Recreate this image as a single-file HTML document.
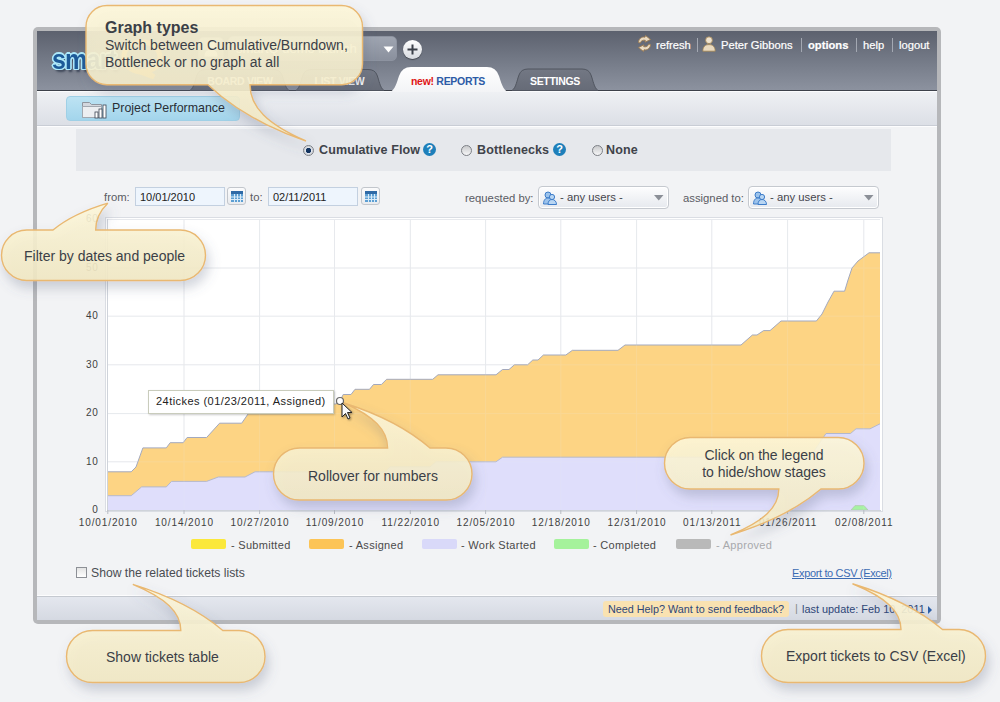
<!DOCTYPE html>
<html><head><meta charset="utf-8"><style>
*{box-sizing:border-box}
html,body{margin:0;padding:0}
body{width:1000px;height:702px;position:relative;overflow:hidden;background:#f2f3f5;font-family:"Liberation Sans",sans-serif;color:#333}
.abs{position:absolute;white-space:nowrap}
#frame{left:33px;top:27px;width:908px;height:597px;background:#b6b7ba;border-radius:5px}
#inner{left:37px;top:31px;width:900px;height:589px;background:#f2f3f5}
#hdr{left:37px;top:31px;width:900px;height:60px;background:linear-gradient(#5c616e,#747a87 50%,#8c929f);border-bottom:1px solid #3d414a}
#sub{left:37px;top:91px;width:900px;height:35px;background:linear-gradient(#eff1f4,#dcdfe6);border-bottom:1px solid #c9cdd5}
.toplinks{top:38.5px;font-size:11.2px;color:#fff;-webkit-text-stroke:0.2px #fff}
.sep{top:38px;width:1px;height:14px;background:#a3a8b2}
.tab{font-size:10.5px;font-weight:bold;color:#fff;text-align:center;letter-spacing:-0.3px}
#radiopanel{left:76px;top:129px;width:815px;height:42px;background:#e6e8ec}
.rlabel{font-size:12.5px;font-weight:bold;color:#40434a;letter-spacing:0.12px}
.radio{width:11px;height:11px;border-radius:50%;border:1px solid #7d8086;background:linear-gradient(#c9cacc,#f6f6f7)}
.q{width:13px;height:13px;border-radius:50%;background:#1e7fba;color:#fff;font-size:11px;font-weight:bold;text-align:center;line-height:13px}
.lbl{font-size:11.3px;color:#5a5b63}
.inp{height:19px;border:1px solid #c3d0e0;background:#eef5fd;font-size:11px;color:#222;padding:3px 0 0 4px}
.cal{width:19px;height:18px;border:1px solid #c2c6cc;border-radius:3px;background:linear-gradient(#fbfbfc,#e9ebee)}
.sel{height:23px;border:1px solid #c5c9cf;border-radius:4px;background:linear-gradient(#fdfdfe,#e6e9ee);box-shadow:inset 0 0 0 1px #fff}
.ylab{font-size:10px;color:#3f3f3f;text-align:right;width:30px;letter-spacing:0.7px}
.xlab{font-size:10px;color:#3f3f3f;letter-spacing:0.9px;width:90px;text-align:center;text-indent:0.9px}
.leg{font-size:11px;color:#4a4a4a;letter-spacing:0.3px}
.sw{width:35px;height:10px;border-radius:2px}
.bubtext{color:#3b3f47;font-size:14px}
</style></head><body>

<div id="frame" class="abs"></div>
<div id="inner" class="abs"></div>
<div id="hdr" class="abs"></div>
<div id="sub" class="abs"></div>
<div class="abs" style="left:37px;top:91px;width:900px;height:1px;background:#fbfcfd"></div><div class="abs" style="left:37px;top:126px;width:900px;height:1px;background:#fdfdfe"></div>
<div class="abs" style="left:52px;top:43px;font-size:25px;font-weight:bold;color:#1d5a98;letter-spacing:-0.8px;transform:scaleY(1.12);transform-origin:0 0;text-shadow:1.5px 0 #aee9fa,-1.5px 0 #aee9fa,0 1.5px #aee9fa,0 -1.5px #aee9fa,1px 1px #aee9fa,-1px -1px #aee9fa,1px -1px #aee9fa,-1px 1px #aee9fa,2px 2.5px 2px rgba(30,40,60,.7)">smart</div>
<svg class="abs" style="left:120px;top:38px" width="48" height="42" viewBox="0 0 48 42"><path d="M22 4c10 0 18 7 18 15s-6 13-14 14l8 6-14-5C10 33 4 26 4 18S12 4 22 4z" fill="none" stroke="#f2a93a" stroke-width="5"/></svg>
<div class="abs" style="left:198px;top:37px;width:26px;height:24px;border-radius:5px;background:linear-gradient(#a9aeb9,#959ba7);border:1px solid #8a909c"></div>
<svg class="abs" style="left:203px;top:40px" width="16" height="17" viewBox="0 0 16 17"><circle cx="8" cy="5" r="3.8" fill="#f6f7f9"/><path d="M1.5 16.5c0-5 2.8-7 6.5-7s6.5 2 6.5 7z" fill="#f0f1f4"/></svg>
<div class="abs" style="left:228px;top:36px;width:169px;height:25px;border:1px solid #8d93a0;border-radius:5px;background:linear-gradient(#9fa5b1,#8a909d)"></div>
<div class="abs" style="left:236px;top:41px;font-size:13px;color:#fff">smartQ demo launch</div>
<svg class="abs" style="left:383px;top:46px" width="11" height="7"><path d="M0.5 0.5h10L5.5 6.5z" fill="#fff"/></svg>
<div class="abs" style="left:403px;top:40px;width:19px;height:19px;border-radius:50%;background:linear-gradient(#ffffff,#d8dbe0);box-shadow:0 1px 1px rgba(0,0,0,.4)"></div>
<svg class="abs" style="left:403px;top:40px" width="19" height="19"><path d="M9.5 4.5v10M4.5 9.5h10" stroke="#3a3f48" stroke-width="2"/></svg>
<svg class="abs" style="left:637px;top:35px" width="15" height="17" viewBox="0 0 15 17"><path d="M1.5 7.5C1.5 4 4.5 1.5 8 2.2L8.5 0.5 13.5 4.5 8 7.2 8.3 5.3C6 4.8 3.8 5.8 3.3 8z" fill="#eadbc3" stroke="#9c7b50" stroke-width="0.9"/><path d="M13.5 9.5C13.5 13 10.5 15.5 7 14.8L6.5 16.5 1.5 12.5 7 9.8 6.7 11.7C9 12.2 11.2 11.2 11.7 9z" fill="#eadbc3" stroke="#9c7b50" stroke-width="0.9"/></svg>
<div class="abs toplinks" style="left:656px">refresh</div>
<div class="abs sep" style="left:697px"></div>
<svg class="abs" style="left:702px;top:36px" width="14" height="16" viewBox="0 0 14 16"><circle cx="7" cy="4.2" r="3.4" fill="#efe3cf" stroke="#a0814f" stroke-width="0.8"/><path d="M0.8 15.2C0.8 10.5 3.5 8.6 7 8.6S13.2 10.5 13.2 15.2z" fill="#e9d9bf" stroke="#a0814f" stroke-width="0.8"/></svg>
<div class="abs toplinks" style="left:721px">Peter Gibbons</div>
<div class="abs sep" style="left:801px"></div>
<div class="abs toplinks" style="left:808px;font-weight:bold">options</div>
<div class="abs sep" style="left:856px"></div>
<div class="abs toplinks" style="left:863px">help</div>
<div class="abs sep" style="left:892px"></div>
<div class="abs toplinks" style="left:899px">logout</div>
<svg class="abs" style="left:180px;top:60px" width="430" height="32" viewBox="180 60 430 32">
 <defs><linearGradient id="tg" x1="0" y1="0" x2="0" y2="1"><stop offset="0" stop-color="#ffffff"/><stop offset="1" stop-color="#f3f4f6"/></linearGradient>
 <linearGradient id="tg2" x1="0" y1="0" x2="0" y2="1"><stop offset="0" stop-color="#737884"/><stop offset="1" stop-color="#666b77"/></linearGradient></defs>
 <path d="M190 90.5 C194 88 195 80 197 75 Q199 69.5 206 69.5 L273 69.5 Q280 69.5 282 75 C284 80 285 88 289 90.5 Z" fill="url(#tg2)" stroke="#50555f" stroke-width="1"/>
 <path d="M296 90.5 C300 88 301 80 303 75 Q305 69.5 312 69.5 L368 69.5 Q375 69.5 377 75 C379 80 380 88 384 90.5 Z" fill="url(#tg2)" stroke="#50555f" stroke-width="1"/>
 <path d="M512 90.5 C516 88 517 80 519 75 Q521 69 528 69 L582 69 Q589 69 591 75 C593 80 594 88 598 90.5 Z" fill="url(#tg2)" stroke="#50555f" stroke-width="1"/>
 <path d="M390 92 C395 90 397 82 399 76 Q402 67 411 67 L487 67 Q496 67 499 76 C501 82 503 90 508 92 Z" fill="url(#tg)"/>
</svg>
<div class="abs tab" style="left:190px;top:75px;width:100px">BOARD VIEW</div>
<div class="abs tab" style="left:295px;top:75px;width:89px">LIST VIEW</div>
<div class="abs tab" style="left:411px;top:75px;text-align:left"><span style="color:#e01515">new!</span> <span style="color:#2c5ba6">REPORTS</span></div>
<div class="abs tab" style="left:510px;top:75px;width:90px">SETTINGS</div>
<div class="abs" style="left:66px;top:96px;width:174px;height:25px;border:1px solid #9fd0e6;border-radius:4px;background:linear-gradient(#bde3f3,#a3d5ec)"></div>
<svg class="abs" style="left:81px;top:100px" width="27" height="19" viewBox="0 0 27 19"><path d="M1.5 2.5h7l2 2h10v13h-19z" fill="#d3d7de" stroke="#8f959e" stroke-width="1"/><path d="M1.5 6.5h19v11h-19z" fill="#eceef1" stroke="#a2a8b0"/><rect x="14" y="12" width="3" height="6" fill="#fff" stroke="#3c4452" stroke-width="0.8"/><rect x="18" y="9" width="3" height="9" fill="#fff" stroke="#3c4452" stroke-width="0.8"/><rect x="22" y="5" width="3" height="13" fill="#fff" stroke="#3c4452" stroke-width="0.8"/></svg>
<div class="abs" style="left:112px;top:101px;font-size:12.4px;color:#2a2e35">Project Performance</div>

<div id="radiopanel" class="abs"></div>
<div class="abs radio" style="left:303px;top:145px;background:radial-gradient(circle,#13345f 0 2.3px,#e6eaf0 3px,#d0d3d8 4px,#f4f4f5 5px)"></div>
<div class="abs rlabel" style="left:319px;top:143px">Cumulative Flow</div>
<div class="abs q" style="left:423px;top:143px">?</div>
<div class="abs radio" style="left:461px;top:145px"></div>
<div class="abs rlabel" style="left:477px;top:143px">Bottlenecks</div>
<div class="abs q" style="left:553px;top:143px">?</div>
<div class="abs radio" style="left:592px;top:145px"></div>
<div class="abs rlabel" style="left:606px;top:143px">None</div>
<div class="abs lbl" style="left:104px;top:191px">from:</div>
<div class="abs inp" style="left:135px;top:187px;width:90px">10/01/2010</div>
<div class="abs cal" style="left:227px;top:187px"></div>
<div class="abs lbl" style="left:250px;top:191px">to:</div>
<div class="abs inp" style="left:268px;top:187px;width:90px">02/11/2011</div>
<div class="abs cal" style="left:361px;top:187px"></div>
<div class="abs lbl" style="left:465px;top:192px">requested by:</div>
<div class="abs sel" style="left:538px;top:186px;width:131px"></div>
<div class="abs lbl" style="left:560px;top:191px;color:#44454d">- any users -</div>
<div class="abs lbl" style="left:683px;top:192px">assigned to:</div>
<div class="abs sel" style="left:748px;top:186px;width:131px"></div>
<div class="abs lbl" style="left:770px;top:191px;color:#44454d">- any users -</div>
<svg class="abs" style="left:654px;top:195px" width="10" height="6"><path d="M0 0h9.5L4.75 5.5z" fill="#8b8f97"/></svg>
<svg class="abs" style="left:864px;top:195px" width="10" height="6"><path d="M0 0h9.5L4.75 5.5z" fill="#8b8f97"/></svg>
<svg class="abs" style="left:231px;top:191px" width="12" height="11" viewBox="0 0 12 11"><rect x="0" y="0" width="12" height="11" fill="#5d9fd3"/><rect x="0" y="0" width="12" height="3" fill="#2f6aa6"/><rect x="3" y="3" width="1" height="8" fill="#d9ebf8"/><rect x="6" y="3" width="1" height="8" fill="#d9ebf8"/><rect x="9" y="3" width="1" height="8" fill="#d9ebf8"/><rect x="0" y="5.5" width="12" height="1" fill="#d9ebf8"/><rect x="0" y="8" width="12" height="1" fill="#d9ebf8"/></svg><svg class="abs" style="left:365px;top:191px" width="12" height="11" viewBox="0 0 12 11"><rect x="0" y="0" width="12" height="11" fill="#5d9fd3"/><rect x="0" y="0" width="12" height="3" fill="#2f6aa6"/><rect x="3" y="3" width="1" height="8" fill="#d9ebf8"/><rect x="6" y="3" width="1" height="8" fill="#d9ebf8"/><rect x="9" y="3" width="1" height="8" fill="#d9ebf8"/><rect x="0" y="5.5" width="12" height="1" fill="#d9ebf8"/><rect x="0" y="8" width="12" height="1" fill="#d9ebf8"/></svg><svg class="abs" style="left:543px;top:191px" width="14" height="14" viewBox="0 0 14 14">
<circle cx="5" cy="4" r="3" fill="#9cc3ec" stroke="#3d7cc9" stroke-width="1"/><path d="M0.5 13c0-4 2-6 4.5-6s4.5 2 4.5 6z" fill="#9cc3ec" stroke="#3d7cc9" stroke-width="1"/>
<circle cx="9" cy="6" r="2.6" fill="#b9d6f3" stroke="#3d7cc9" stroke-width="1"/><path d="M5 13.5c0-3.5 1.8-5 4-5s4.5 1.5 4.5 5z" fill="#b9d6f3" stroke="#3d7cc9" stroke-width="1"/></svg><svg class="abs" style="left:753px;top:191px" width="14" height="14" viewBox="0 0 14 14">
<circle cx="5" cy="4" r="3" fill="#9cc3ec" stroke="#3d7cc9" stroke-width="1"/><path d="M0.5 13c0-4 2-6 4.5-6s4.5 2 4.5 6z" fill="#9cc3ec" stroke="#3d7cc9" stroke-width="1"/>
<circle cx="9" cy="6" r="2.6" fill="#b9d6f3" stroke="#3d7cc9" stroke-width="1"/><path d="M5 13.5c0-3.5 1.8-5 4-5s4.5 1.5 4.5 5z" fill="#b9d6f3" stroke="#3d7cc9" stroke-width="1"/></svg>
<svg class="abs" style="left:0;top:0" width="1000" height="702">
 <rect x="105.5" y="217.5" width="777" height="294" fill="#fff" stroke="#dadde3" stroke-width="1"/>
 <g stroke="#e7e9ed" stroke-width="1"><line x1="184" y1="219" x2="184" y2="510" /><line x1="259.6" y1="219" x2="259.6" y2="510" /><line x1="334.5" y1="219" x2="334.5" y2="510" /><line x1="410.3" y1="219" x2="410.3" y2="510" /><line x1="485.6" y1="219" x2="485.6" y2="510" /><line x1="560.8" y1="219" x2="560.8" y2="510" /><line x1="636.6" y1="219" x2="636.6" y2="510" /><line x1="711.8" y1="219" x2="711.8" y2="510" /><line x1="787.6" y1="219" x2="787.6" y2="510" /><line x1="863.8" y1="219" x2="863.8" y2="510" /><line x1="107" y1="461.8" x2="880" y2="461.8" /><line x1="107" y1="413.6" x2="880" y2="413.6" /><line x1="107" y1="364.8" x2="880" y2="364.8" /><line x1="107" y1="316.2" x2="880" y2="316.2" /><line x1="107" y1="268" x2="880" y2="268" /><line x1="107" y1="219.5" x2="880" y2="219.5" /></g>
 <polygon points="107.8,495.7 131.2,495.7 141.6,486.9 166.3,486.9 171.5,481.4 206.6,481.4 218.3,477.0 245.0,477.0 255.0,471.8 385.0,471.8 390.0,466.9 430.0,466.9 436.0,461.8 496.0,461.8 502.5,457.2 810.0,457.2 826.0,433.5 850.5,433.5 856.0,428.8 870.0,428.8 880.0,423.8 880.0,510.0 107.8,510.0" fill="#dfdefb" />
 <polygon points="107.8,471.8 131.2,471.8 136.0,467.0 142.9,447.9 166.3,447.9 170.2,442.7 183.2,442.7 187.1,437.5 206.6,437.5 219.6,423.2 241.7,423.2 248.2,413.8 290.0,413.8 295.0,409.0 320.0,409.0 326.0,404.0 336.0,404.0 340.0,401.0 343.2,394.5 351.0,394.5 355.0,389.3 369.5,389.3 373.5,384.5 381.4,384.5 386.6,379.3 432.7,379.3 438.0,374.8 496.0,374.8 502.5,369.5 509.0,369.5 514.4,364.8 527.6,364.8 532.8,360.0 538.0,360.0 543.4,355.0 565.8,355.0 572.4,350.3 618.0,350.3 625.0,345.0 741.0,345.0 752.4,335.0 757.0,335.0 763.6,330.6 770.0,330.6 781.0,321.0 816.4,321.0 822.0,314.0 828.0,302.0 834.0,291.2 844.6,291.2 848.0,280.0 852.0,268.0 858.0,261.0 869.0,252.8 880.0,252.8 880.0,423.8 870.0,428.8 856.0,428.8 850.5,433.5 826.0,433.5 810.0,457.2 502.5,457.2 496.0,461.8 436.0,461.8 430.0,466.9 390.0,466.9 385.0,471.8 255.0,471.8 245.0,477.0 218.3,477.0 206.6,481.4 171.5,481.4 166.3,486.9 141.6,486.9 131.2,495.7 107.8,495.7" fill="#fdd484" />
 <polyline points="107.8,495.7 131.2,495.7 141.6,486.9 166.3,486.9 171.5,481.4 206.6,481.4 218.3,477.0 245.0,477.0 255.0,471.8 385.0,471.8 390.0,466.9 430.0,466.9 436.0,461.8 496.0,461.8 502.5,457.2 810.0,457.2 826.0,433.5 850.5,433.5 856.0,428.8 870.0,428.8 880.0,423.8" fill="none" stroke="#b4b8cd" stroke-width="1"/>
 <polyline points="107.8,471.8 131.2,471.8 136.0,467.0 142.9,447.9 166.3,447.9 170.2,442.7 183.2,442.7 187.1,437.5 206.6,437.5 219.6,423.2 241.7,423.2 248.2,413.8 290.0,413.8 295.0,409.0 320.0,409.0 326.0,404.0 336.0,404.0 340.0,401.0 343.2,394.5 351.0,394.5 355.0,389.3 369.5,389.3 373.5,384.5 381.4,384.5 386.6,379.3 432.7,379.3 438.0,374.8 496.0,374.8 502.5,369.5 509.0,369.5 514.4,364.8 527.6,364.8 532.8,360.0 538.0,360.0 543.4,355.0 565.8,355.0 572.4,350.3 618.0,350.3 625.0,345.0 741.0,345.0 752.4,335.0 757.0,335.0 763.6,330.6 770.0,330.6 781.0,321.0 816.4,321.0 822.0,314.0 828.0,302.0 834.0,291.2 844.6,291.2 848.0,280.0 852.0,268.0 858.0,261.0 869.0,252.8 880.0,252.8" fill="none" stroke="#a3a9be" stroke-width="1"/>
 <path d="M851 510 L855 505.6 L864 505.6 L868 510 Z" fill="#a6f3a2" stroke="#b5c8b5" stroke-width="0.8"/>
 <g stroke="#e7e9ed" stroke-width="1" opacity="0.15"><line x1="184" y1="219" x2="184" y2="510" /><line x1="259.6" y1="219" x2="259.6" y2="510" /><line x1="334.5" y1="219" x2="334.5" y2="510" /><line x1="410.3" y1="219" x2="410.3" y2="510" /><line x1="485.6" y1="219" x2="485.6" y2="510" /><line x1="560.8" y1="219" x2="560.8" y2="510" /><line x1="636.6" y1="219" x2="636.6" y2="510" /><line x1="711.8" y1="219" x2="711.8" y2="510" /><line x1="787.6" y1="219" x2="787.6" y2="510" /><line x1="863.8" y1="219" x2="863.8" y2="510" /><line x1="107" y1="461.8" x2="880" y2="461.8" /><line x1="107" y1="413.6" x2="880" y2="413.6" /><line x1="107" y1="364.8" x2="880" y2="364.8" /><line x1="107" y1="316.2" x2="880" y2="316.2" /><line x1="107" y1="268" x2="880" y2="268" /><line x1="107" y1="219.5" x2="880" y2="219.5" /></g>
 <line x1="107" y1="510.5" x2="881" y2="510.5" stroke="#cfd3da"/>
 <line x1="107.5" y1="219" x2="107.5" y2="511" stroke="#cfd3da"/>
 <g stroke="#b8bcc4" stroke-width="1"><line x1="107.8" y1="510" x2="107.8" y2="514" /><line x1="184" y1="510" x2="184" y2="514" /><line x1="259.6" y1="510" x2="259.6" y2="514" /><line x1="334.5" y1="510" x2="334.5" y2="514" /><line x1="410.3" y1="510" x2="410.3" y2="514" /><line x1="485.6" y1="510" x2="485.6" y2="514" /><line x1="560.8" y1="510" x2="560.8" y2="514" /><line x1="636.6" y1="510" x2="636.6" y2="514" /><line x1="711.8" y1="510" x2="711.8" y2="514" /><line x1="787.6" y1="510" x2="787.6" y2="514" /><line x1="863.8" y1="510" x2="863.8" y2="514" /></g>
</svg>
<div class="abs ylab" style="left:68.5px;top:503.8px">0</div><div class="abs ylab" style="left:68.5px;top:455.6px">10</div><div class="abs ylab" style="left:68.5px;top:407.4px">20</div><div class="abs ylab" style="left:68.5px;top:358.6px">30</div><div class="abs ylab" style="left:68.5px;top:310.0px">40</div><div class="abs ylab" style="left:68.5px;top:261.8px">50</div><div class="abs ylab" style="left:68.5px;top:213.3px">60</div><div class="abs xlab" style="left:62.8px;top:517px">10/01/2010</div><div class="abs xlab" style="left:139.0px;top:517px">10/14/2010</div><div class="abs xlab" style="left:214.6px;top:517px">10/27/2010</div><div class="abs xlab" style="left:289.5px;top:517px">11/09/2010</div><div class="abs xlab" style="left:365.3px;top:517px">11/22/2010</div><div class="abs xlab" style="left:440.6px;top:517px">12/05/2010</div><div class="abs xlab" style="left:515.8px;top:517px">12/18/2010</div><div class="abs xlab" style="left:591.6px;top:517px">12/31/2010</div><div class="abs xlab" style="left:666.8px;top:517px">01/13/2011</div><div class="abs xlab" style="left:742.6px;top:517px">01/26/2011</div><div class="abs xlab" style="left:818.8px;top:517px">02/08/2011</div>
<div class="abs sw" style="left:191px;top:539px;background:#fbe83b"></div><div class="abs leg" style="left:231px;top:539px">- Submitted</div>
<div class="abs sw" style="left:309px;top:539px;background:#fcc456"></div><div class="abs leg" style="left:349px;top:539px">- Assigned</div>
<div class="abs sw" style="left:422px;top:539px;background:#d9d9f9"></div><div class="abs leg" style="left:461px;top:539px">- Work Started</div>
<div class="abs sw" style="left:554px;top:539px;background:#a5f29b"></div><div class="abs leg" style="left:593px;top:539px">- Completed</div>
<div class="abs sw" style="left:676px;top:539px;background:#b9b9b9"></div><div class="abs leg" style="left:716px;top:539px;color:#a9aaad">- Approved</div>
<div class="abs" style="left:148px;top:390px;width:186px;height:24px;background:#fff;border:1px solid #c9ccbc;box-shadow:1px 1px 2px rgba(0,0,0,.2)"></div>
<div class="abs" style="left:156px;top:395px;font-size:11px;letter-spacing:0.45px;color:#222">24tickes (01/23/2011, Assigned)</div>
<svg class="abs" style="left:330px;top:394px" width="30" height="30"><circle cx="10" cy="7" r="3.5" fill="#fff" stroke="#666" stroke-width="1.2"/>
<path d="M12 9 L12 23 L15.5 19.5 L18 25 L20 24 L17.5 18.5 L22 18.5 Z" fill="#fff" stroke="#222" stroke-width="1" style="filter:drop-shadow(1px 1px 1px rgba(0,0,0,.4))"/></svg>

<div class="abs" style="left:76px;top:567px;width:11px;height:11px;border:1px solid #8d9096;background:linear-gradient(#e4e4e4,#fff)"></div>
<div class="abs" style="left:91px;top:565.5px;font-size:12.2px;color:#4a4d52">Show the related tickets lists</div>
<div class="abs" style="left:792px;top:567px;font-size:11px;color:#3b6bb3;text-decoration:underline;letter-spacing:-0.35px">Export to CSV (Excel)</div>
<div class="abs" style="left:37px;top:595px;width:900px;height:1px;background:#fdfdfe"></div><div class="abs" style="left:37px;top:596px;width:900px;height:24px;background:linear-gradient(#e4e7ee,#d5d9e2);border-top:1px solid #c5c9d0"></div>
<div class="abs" style="left:603px;top:601px;width:186px;height:16px;background:#f9e2b1;border-radius:3px"></div>
<div class="abs" style="left:608px;top:603px;font-size:10.8px;color:#2e4677">Need Help? Want to send feedback?</div>
<div class="abs" style="left:795px;top:602px;font-size:11px;color:#888">|</div>
<div class="abs" style="left:802px;top:603px;font-size:10.9px;color:#2e4677">last update: Feb 10, 2011</div>
<svg class="abs" style="left:927px;top:605px" width="6" height="10"><path d="M1 1 L5 5 L1 9 Z" fill="#2c5fa8"/></svg>
<svg class="abs" style="left:0;top:0" width="1000" height="702">
<defs>
<linearGradient id="bg" x1="0" y1="0" x2="0" y2="1"><stop offset="0" stop-color="#fdf7d9"/><stop offset="1" stop-color="#f2e9c4"/></linearGradient>
<filter id="sh" x="-20%" y="-30%" width="140%" height="170%"><feGaussianBlur in="SourceAlpha" stdDeviation="6"/><feOffset dx="3" dy="7" result="b"/><feFlood flood-color="#5a6580" flood-opacity="0.3"/><feComposite in2="b" operator="in"/><feMerge><feMergeNode/><feMergeNode in="SourceGraphic"/></feMerge></filter>
</defs>
<path d="M107.00,5.50 L341.50,5.50 A21,21 0 0 1 362.50,26.50 L362.50,63.70 A21,21 0 0 1 341.50,84.70 L250.00,84.70 C250.00,107.22 267.36,124.11 306.00,141.00 C273.66,129.74 237.40,112.85 208.00,84.70 L107.00,84.70 A21,21 0 0 1 86.00,63.70 L86.00,26.50 A21,21 0 0 1 107.00,5.50 Z" fill="url(#bg)" fill-opacity="0.89" stroke="#e9b871" stroke-width="1.4" filter="url(#sh)"/>
<path d="M26.75,230.00 L53.00,230.00 C69.44,216.60 89.72,208.56 107.80,203.20 C99.45,211.24 95.70,219.28 95.70,230.00 L180.25,230.00 A25.25,25.25 0 0 1 205.50,255.25 L205.50,255.25 A25.25,25.25 0 0 1 180.25,280.50 L26.75,280.50 A25.25,25.25 0 0 1 1.50,255.25 L1.50,255.25 A25.25,25.25 0 0 1 26.75,230.00 Z" fill="url(#bg)" fill-opacity="0.89" stroke="#e9b871" stroke-width="1.4" filter="url(#sh)"/>
<path d="M299.50,448.00 L387.60,448.00 C387.60,430.00 374.08,416.50 344.00,403.00 C372.38,412.00 404.20,425.50 430.00,448.00 L446.00,448.00 A26,26 0 0 1 472.00,474.00 L472.00,474.00 A26,26 0 0 1 446.00,500.00 L299.50,500.00 A26,26 0 0 1 273.50,474.00 L273.50,474.00 A26,26 0 0 1 299.50,448.00 Z" fill="url(#bg)" fill-opacity="0.89" stroke="#e9b871" stroke-width="1.4" filter="url(#sh)"/>
<path d="M690.25,437.50 L838.25,437.50 A25.75,25.75 0 0 1 864.00,463.25 L864.00,463.25 A25.75,25.75 0 0 1 838.25,489.00 L821.00,489.00 C793.85,512.00 760.37,525.80 730.50,535.00 C763.83,521.20 778.80,507.40 778.80,489.00 L690.25,489.00 A25.75,25.75 0 0 1 664.50,463.25 L664.50,463.25 A25.75,25.75 0 0 1 690.25,437.50 Z" fill="url(#bg)" fill-opacity="0.89" stroke="#e9b871" stroke-width="1.4" filter="url(#sh)"/>
<path d="M92.50,630.50 L180.80,630.50 C180.80,612.06 165.92,598.23 132.80,584.40 C162.50,593.62 195.80,607.45 222.80,630.50 L239.00,630.50 A26,26 0 0 1 265.00,656.50 L265.00,656.50 A26,26 0 0 1 239.00,682.50 L92.50,682.50 A26,26 0 0 1 66.50,656.50 L66.50,656.50 A26,26 0 0 1 92.50,630.50 Z" fill="url(#bg)" fill-opacity="0.89" stroke="#e9b871" stroke-width="1.4" filter="url(#sh)"/>
<path d="M788.00,629.50 L901.00,629.50 C901.00,611.20 885.97,597.48 852.50,583.75 C882.20,592.90 915.50,606.62 942.50,629.50 L959.00,629.50 A26.5,26.5 0 0 1 985.50,656.00 L985.50,656.00 A26.5,26.5 0 0 1 959.00,682.50 L788.00,682.50 A26.5,26.5 0 0 1 761.50,656.00 L761.50,656.00 A26.5,26.5 0 0 1 788.00,629.50 Z" fill="url(#bg)" fill-opacity="0.89" stroke="#e9b871" stroke-width="1.4" filter="url(#sh)"/>
</svg>

<div class="abs bubtext" style="left:105px;top:18px;font-size:16px;font-weight:bold;line-height:19px">Graph types</div>
<div class="abs bubtext" style="left:105px;top:36.5px;line-height:17px">Switch between Cumulative/Burndown,<br>Bottleneck or no graph at all</div>
<div class="abs bubtext" style="left:24px;top:248px">Filter by dates and people</div>
<div class="abs bubtext" style="left:308px;top:468px">Rollover for numbers</div>
<div class="abs bubtext" style="left:664px;top:446.5px;width:200px;text-align:center;line-height:17px">Click on the legend<br>to hide/show stages</div>
<div class="abs bubtext" style="left:106px;top:649px">Show tickets table</div>
<div class="abs bubtext" style="left:786px;top:648px">Export tickets to CSV (Excel)</div>

</body></html>
